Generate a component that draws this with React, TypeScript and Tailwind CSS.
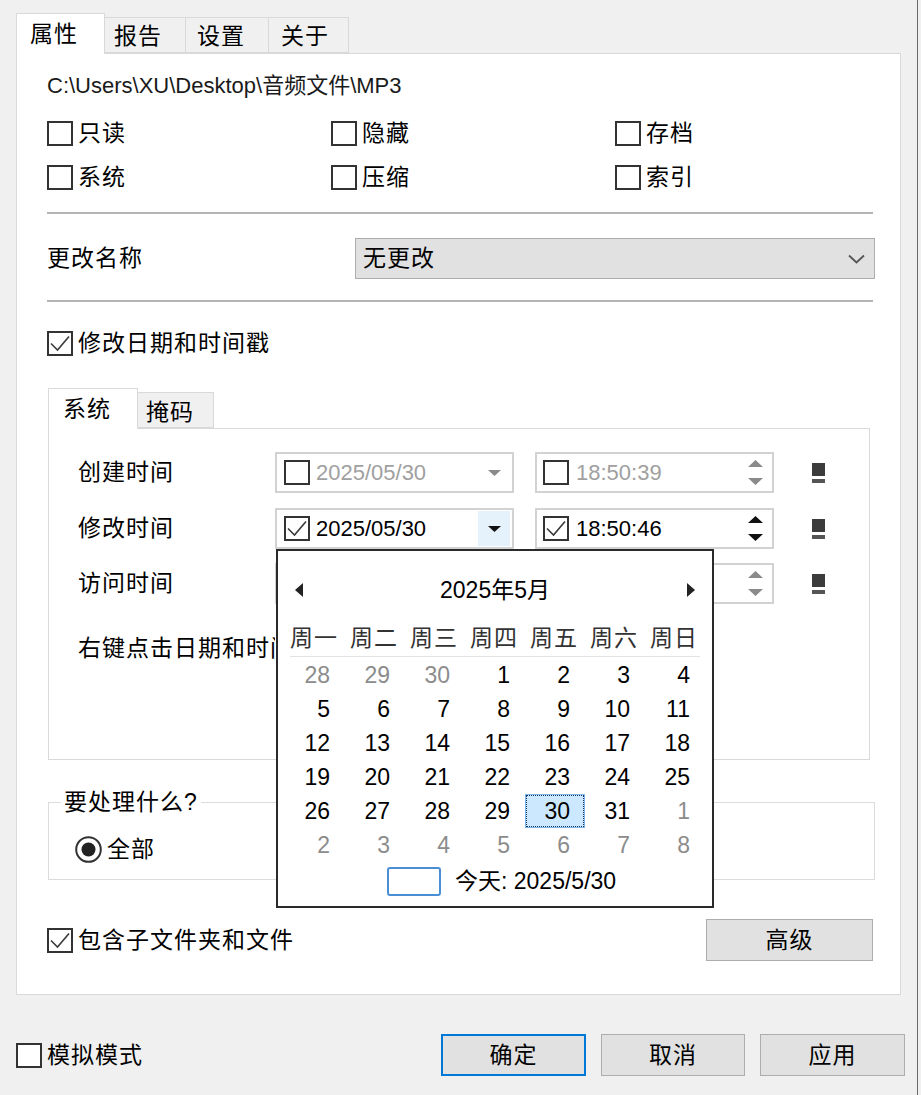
import React from 'react';

const ZH = 'text-[23px] tracking-[1px]';

function Box({ checked = false }: { checked?: boolean }) {
  return (
    <span className="flex h-[25px] w-[26px] shrink-0 items-center justify-center border-2 border-[#333333] bg-white">
      {checked && (
        <svg width="22" height="21" viewBox="0 0 22 21">
          <path d="M2 10.5 L8.5 17 L20 3.5" fill="none" stroke="#3a3a3a" strokeWidth="1.6" />
        </svg>
      )}
    </span>
  );
}

function CheckLabel({ label, checked = false }: { label: string; checked?: boolean }) {
  return (
    <div className="flex h-[25px] items-center gap-[5px]">
      <Box checked={checked} />
      <span className={`leading-none ${ZH}`}>{label}</span>
    </div>
  );
}

function TimeRow({
  label,
  date,
  time,
  enabled,
  hot,
}: {
  label: string;
  date: string;
  time: string;
  enabled: boolean;
  hot?: boolean;
}) {
  const txt = enabled ? 'text-black' : 'text-[#a0a0a0]';
  const arrow = enabled ? '#111111' : '#8a8a8a';
  return (
    <div className="flex h-[41px] items-center">
      <span className={`w-[197px] leading-none ${ZH}`}>{label}</span>
      <div className="flex h-[41px] w-[239px] items-center border-2 border-[#d2d2d2] pl-[7px] pr-[2px]">
        <Box checked={enabled} />
        <span className={`ml-[6px] text-[22px] leading-none ${txt}`}>{date}</span>
        <span className={`ml-auto flex h-[35px] w-[32px] items-center justify-center ${hot ? 'bg-[#e5f1fb]' : ''}`}>
          <svg width="13" height="6" viewBox="0 0 13 6">
            <path d="M0 0h13L6.5 6z" fill={arrow} />
          </svg>
        </span>
      </div>
      <div className="ml-[21px] flex h-[41px] w-[239px] items-center border-2 border-[#d2d2d2] pl-[6px] pr-[9px]">
        <Box checked={enabled} />
        <span className={`ml-[7px] text-[22px] leading-none ${txt}`}>{time}</span>
        <svg className="ml-auto" width="15" height="25" viewBox="0 0 15 25">
          <path d="M0 7h15L7.5 0z M0 18h15L7.5 25z" fill={arrow} />
        </svg>
      </div>
      <svg className="ml-[38px]" width="13" height="20" viewBox="0 0 13 20">
        <rect width="13" height="13" fill="#3c3c3c" />
        <rect y="16" width="13" height="4" fill="#555555" />
      </svg>
    </div>
  );
}

const WEEK = ['周一', '周二', '周三', '周四', '周五', '周六', '周日'];
const DAYS: { d: number; muted?: boolean; sel?: boolean }[][] = [
  [{ d: 28, muted: true }, { d: 29, muted: true }, { d: 30, muted: true }, { d: 1 }, { d: 2 }, { d: 3 }, { d: 4 }],
  [{ d: 5 }, { d: 6 }, { d: 7 }, { d: 8 }, { d: 9 }, { d: 10 }, { d: 11 }],
  [{ d: 12 }, { d: 13 }, { d: 14 }, { d: 15 }, { d: 16 }, { d: 17 }, { d: 18 }],
  [{ d: 19 }, { d: 20 }, { d: 21 }, { d: 22 }, { d: 23 }, { d: 24 }, { d: 25 }],
  [{ d: 26 }, { d: 27 }, { d: 28 }, { d: 29 }, { d: 30, sel: true }, { d: 31 }, { d: 1, muted: true }],
  [
    { d: 2, muted: true },
    { d: 3, muted: true },
    { d: 4, muted: true },
    { d: 5, muted: true },
    { d: 6, muted: true },
    { d: 7, muted: true },
    { d: 8, muted: true },
  ],
];

function Calendar() {
  return (
    <div className="absolute left-[276px] top-[549px] z-20 h-[359px] w-[438px] border-2 border-[#2a2a2a] bg-white">
      <div className="mt-[24px] flex h-[30px] items-center justify-between px-[17px]">
        <svg width="8" height="14" viewBox="0 0 8 14">
          <path d="M8 0v14L0 7z" fill="#222222" />
        </svg>
        <span className="text-[23px] leading-none">2025年5月</span>
        <svg width="8" height="14" viewBox="0 0 8 14">
          <path d="M0 0v14L8 7z" fill="#222222" />
        </svg>
      </div>
      <div className="ml-[6px] mt-[19px] grid h-[28px] w-[420px] grid-cols-[repeat(7,60px)] items-center">
        {WEEK.map((w) => (
          <span key={w} className={`text-center leading-none text-[#333333] ${ZH}`}>
            {w}
          </span>
        ))}
      </div>
      <div className="ml-[12px] mt-[4px] h-px w-[410px] bg-[#e2e2e2]" />
      <div className="ml-[6px] mt-px grid w-[420px] grid-cols-[repeat(7,60px)]">
        {DAYS.flat().map((c, i) => (
          <div key={i} className="flex h-[34px] py-px pl-[2px]">
            <div
              className={`flex h-full w-full items-center justify-end text-[23px] leading-none ${
                c.sel
                  ? 'border border-dotted border-[#17335f] bg-[#cce8ff] pr-[13px] outline outline-[#7db4ea]'
                  : 'pr-[14px]'
              } ${c.muted ? 'text-[#8c8c8c]' : 'text-black'}`}
            >
              {c.d}
            </div>
          </div>
        ))}
      </div>
      <div className="mt-[4px] flex h-[30px] items-center gap-[14px] pl-[109px]">
        <span className="h-[29px] w-[54px] rounded-[3px] border-2 border-[#4a8fd6]" />
        <span className="text-[23px] leading-none">今天: 2025/5/30</span>
      </div>
    </div>
  );
}

export default function App() {
  return (
    <div className="relative flex h-[1095px] w-[921px] overflow-hidden bg-[#f0f0f0] font-['Liberation_Sans','Noto_Sans_CJK_SC',sans-serif] text-black">
      <div className="flex w-[917px] flex-col">
        {/* outer tabs */}
        <div className="ml-[16px] mt-[13px] flex h-[40px] items-end">
          <div className="relative z-10 -mb-px flex h-[41px] w-[89px] items-center border border-b-0 border-[#d9d9d9] bg-white pl-[13px]">
            <span className={`leading-none ${ZH}`}>属性</span>
          </div>
          <div className="flex h-[36px] w-[81px] items-center border border-l-0 border-[#d9d9d9] bg-[#f0f0f0] pl-[9px] pt-[2px]">
            <span className={`leading-none ${ZH}`}>报告</span>
          </div>
          <div className="flex h-[36px] w-[83px] items-center border border-l-0 border-[#d9d9d9] bg-[#f0f0f0] pl-[11px] pt-[2px]">
            <span className={`leading-none ${ZH}`}>设置</span>
          </div>
          <div className="flex h-[36px] w-[80px] items-center border border-l-0 border-[#d9d9d9] bg-[#f0f0f0] pl-[12px] pt-[2px]">
            <span className={`leading-none ${ZH}`}>关于</span>
          </div>
        </div>

        {/* panel */}
        <div className="ml-[16px] flex h-[942px] w-[885px] flex-col border border-[#d9d9d9] bg-white pl-[30px]">
          <div className="mt-[20px] flex h-[24px] items-center text-[22px] leading-none text-[#1a1a1a]">
            C:\Users\XU\Desktop\音频文件\MP3
          </div>

          <div className="mt-[23px] grid grid-cols-[284px_284px_1fr] gap-y-[19px]">
            <CheckLabel label="只读" />
            <CheckLabel label="隐藏" />
            <CheckLabel label="存档" />
            <CheckLabel label="系统" />
            <CheckLabel label="压缩" />
            <CheckLabel label="索引" />
          </div>

          <div className="mt-[22px] h-[2px] w-[826px] bg-[#b5b5b5]" />

          <div className="mt-[24px] flex h-[41px] items-center">
            <span className={`w-[308px] leading-none ${ZH}`}>更改名称</span>
            <div className="flex h-[41px] w-[520px] items-center border border-[#adadad] bg-[#e1e1e1] pl-[7px] pr-[9px]">
              <span className={`leading-none ${ZH}`}>无更改</span>
              <svg className="ml-auto" width="17" height="10" viewBox="0 0 17 10">
                <path d="M1 1.5 L8.5 8.5 L16 1.5" fill="none" stroke="#555555" strokeWidth="1.8" />
              </svg>
            </div>
          </div>

          <div className="mt-[21px] h-[2px] w-[826px] bg-[#b5b5b5]" />

          <div className="mt-[28px] flex h-[26px] items-center">
            <CheckLabel label="修改日期和时间戳" checked />
          </div>

          {/* inner tabs */}
          <div className="ml-px mt-[32px] flex h-[40px] items-end">
            <div className="relative z-10 -mb-px flex h-[41px] w-[90px] items-center border border-b-0 border-[#d9d9d9] bg-white pl-[14px]">
              <span className={`leading-none ${ZH}`}>系统</span>
            </div>
            <div className="flex h-[36px] w-[76px] items-center border border-l-0 border-[#d9d9d9] bg-[#f0f0f0] pl-[8px] pt-[4px]">
              <span className={`leading-none ${ZH}`}>掩码</span>
            </div>
          </div>
          <div className="ml-px flex h-[332px] w-[822px] flex-col border border-[#d9d9d9] bg-white pl-[29px]">
            <div className="mt-[23px]">
              <TimeRow label="创建时间" date="2025/05/30" time="18:50:39" enabled={false} />
            </div>
            <div className="mt-[15px]">
              <TimeRow label="修改时间" date="2025/05/30" time="18:50:46" enabled hot />
            </div>
            <div className="mt-[14px]">
              <TimeRow label="访问时间" date="2025/05/30" time="18:50:39" enabled={false} />
            </div>
            {/* the popup calendar covers the rest of this hint */}
            <div className={`mt-[32px] flex h-[24px] w-[197px] items-center overflow-hidden whitespace-nowrap leading-none ${ZH}`}>
              右键点击日期和时间可快速设置
            </div>
          </div>

          <fieldset className="ml-px mt-[29px] h-[91px] w-[827px] border border-[#dcdcdc]">
            <legend className={`ml-[12px] px-[3px] leading-[26px] ${ZH}`}>要处理什么?</legend>
            <div className="ml-[26px] mt-[21px] flex h-[26px] items-center gap-[5px]">
              <svg width="27" height="27" viewBox="0 0 27 27">
                <circle cx="13.5" cy="13.5" r="12.3" fill="white" stroke="#333333" strokeWidth="2" />
                <circle cx="13.5" cy="13.5" r="7" fill="#222222" />
              </svg>
              <span className={`leading-none ${ZH}`}>全部</span>
            </div>
          </fieldset>

          <div className="mt-[39px] flex h-[42px] w-[826px] items-center">
            <CheckLabel label="包含子文件夹和文件" checked />
            <button className="ml-auto flex h-[42px] w-[167px] items-center justify-center border border-[#adadad] bg-[#e1e1e1]">
              <span className={`leading-none ${ZH}`}>高级</span>
            </button>
          </div>
        </div>

        {/* footer */}
        <div className="mt-[39px] flex h-[42px] items-center pl-[16px] pr-[12px]">
          <CheckLabel label="模拟模式" />
          <div className="ml-auto flex gap-[15px]">
            <button className="flex h-[42px] w-[145px] items-center justify-center border-2 border-[#0078d7] bg-[#e1e1e1]">
              <span className={`leading-none ${ZH}`}>确定</span>
            </button>
            <button className="flex h-[42px] w-[144px] items-center justify-center border border-[#adadad] bg-[#e1e1e1]">
              <span className={`leading-none ${ZH}`}>取消</span>
            </button>
            <button className="flex h-[42px] w-[145px] items-center justify-center border border-[#adadad] bg-[#e1e1e1]">
              <span className={`leading-none ${ZH}`}>应用</span>
            </button>
          </div>
        </div>
      </div>
      <div className="h-full w-px bg-[#6b6b6b]" />
      <Calendar />
    </div>
  );
}
